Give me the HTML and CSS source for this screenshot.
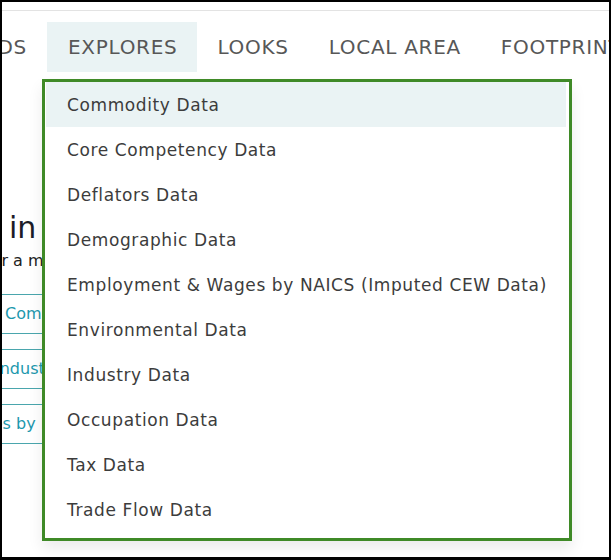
FILE: index.html
```html
<!DOCTYPE html>
<html lang="en">
<head>
<meta charset="utf-8">
<title>Explores menu</title>
<link rel="stylesheet" href="styles.css">
</head>
<body>
<div class="frame">
  <div class="topbar"></div>
  <nav class="nav">
    <div class="nav-item nav-clip"><span>TRENDS</span></div>
    <div class="nav-item active">EXPLORES</div>
    <div class="nav-item">LOOKS</div>
    <div class="nav-item">LOCAL AREA</div>
    <div class="nav-item">FOOTPRINTS</div>
  </nav>
  <main class="content">
    <h2 class="heading">in the</h2>
    <p class="lead">for a more detailed look</p>
    <div class="links">
      <div class="link-row link-a">Commodity Data</div>
      <div class="link-row link-b">Industry Data</div>
      <div class="link-row link-c">Wages by NAICS</div>
    </div>
  </main>
  <ul class="dropdown">
    <li class="dd-item hover">Commodity Data</li>
    <li class="dd-item">Core Competency Data</li>
    <li class="dd-item">Deflators Data</li>
    <li class="dd-item">Demographic Data</li>
    <li class="dd-item">Employment &amp; Wages by NAICS (Imputed CEW Data)</li>
    <li class="dd-item">Environmental Data</li>
    <li class="dd-item">Industry Data</li>
    <li class="dd-item">Occupation Data</li>
    <li class="dd-item">Tax Data</li>
    <li class="dd-item">Trade Flow Data</li>
  </ul>
</div>
</body>
</html>
```
FILE: styles.css
```css
html, body {
  margin: 0;
  padding: 0;
  background: #ffffff;
}
.frame {
  position: relative;
  width: 611px;
  height: 560px;
  box-sizing: border-box;
  border: 2px solid #000;
  border-bottom-width: 3px;
  overflow: hidden;
  background: #fff;
  font-family: "DejaVu Sans", "Liberation Sans", sans-serif;
}
.topbar {
  height: 8px;
  border-bottom: 1px solid #e3e3e3;
}
.nav {
  display: flex;
  margin-top: 11px;
  height: 50px;
  white-space: nowrap;
}
.nav-item {
  flex: none;
  padding: 0 20px;
  font-size: 20px;
  letter-spacing: 0.7px;
  line-height: 50px;
  color: #575757;
}
.nav-clip {
  width: 25px;
  display: flex;
  justify-content: flex-end;
  overflow: hidden;
  padding: 0 20px 0 0;
}
.nav-item.active {
  background: #eaf3f4;
  padding-left: 21px;
}
.content {
  padding-top: 138px;
  width: 200px;
}
.heading {
  margin: 0;
  padding-left: 7px;
  font-size: 30px;
  font-weight: normal;
  line-height: 36px;
  color: #1c1c28;
}
.lead {
  margin: 5px 0 0 0;
  font-size: 16px;
  line-height: 20px;
  text-indent: -16px;
  color: #222;
  white-space: nowrap;
  overflow: hidden;
}
.links {
  margin-top: 23px;
  display: flex;
  flex-direction: column;
  gap: 15px;
}
.link-row {
  height: 38px;
  line-height: 38px;
  border-top: 1px solid #4aa6ad;
  border-bottom: 1px solid #4aa6ad;
  font-size: 16px;
  color: #1d98ad;
  white-space: nowrap;
  overflow: hidden;
}
.link-a { padding-left: 3px; }
.link-b { text-indent: -7px; }
.link-c { text-indent: -44px; }
.dropdown {
  position: absolute;
  left: 40px;
  top: 77px;
  width: 520px;
  margin: 0;
  padding: 0 3px 6px 1px;
  list-style: none;
  background: #fff;
  border: 3px solid #3f8a27;
  box-shadow: 0 8px 14px rgba(0, 0, 0, 0.08);
}
.dd-item {
  height: 45px;
  line-height: 46px;
  padding-left: 21px;
  font-size: 17px;
  letter-spacing: 0.6px;
  color: #3c3c3c;
  white-space: nowrap;
}
.dd-item.hover {
  background: #eaf3f4;
}
```
